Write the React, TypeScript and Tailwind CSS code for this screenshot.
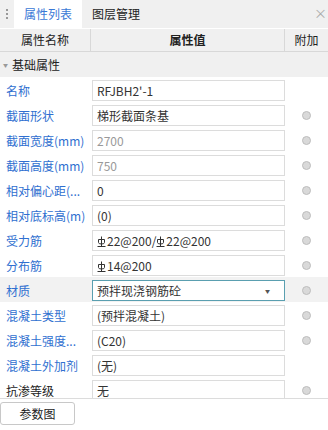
import React from 'react';

type Row = {
  label: string;
  value: React.ReactNode;
  dim?: boolean;
  dot?: boolean;
  plain?: boolean;
  select?: boolean;
};

function Rebar() {
  return (
    <svg width="9" height="11" viewBox="0 0 9 11" className="inline-block mr-[1px] -mt-[3px] align-middle" fill="none" stroke="#333" strokeWidth="1">
      <path d="M4.5 0.5V10.5" />
      <path d="M1.5 3.5V6.5Q1.5 8 4.5 8Q7.5 8 7.5 6.5V3.5Z" />
      <path d="M0.5 10.5H8.5" />
    </svg>
  );
}

const rows: Row[] = [
  { label: '名称', value: "RFJBH2'-1" },
  { label: '截面形状', value: '梯形截面条基', dot: true },
  { label: '截面宽度(mm)', value: '2700', dim: true, dot: true },
  { label: '截面高度(mm)', value: '750', dim: true, dot: true },
  { label: '相对偏心距(...', value: '0', dot: true },
  { label: '相对底标高(m)', value: '(0)', dot: true },
  {
    label: '受力筋',
    value: (
      <>
        <Rebar />22@200/<Rebar />22@200
      </>
    ),
    dot: true,
  },
  {
    label: '分布筋',
    value: (
      <>
        <Rebar />14@200
      </>
    ),
    dot: true,
  },
  { label: '材质', value: '预拌现浇钢筋砼', dot: true, select: true },
  { label: '混凝土类型', value: '(预拌混凝土)', dot: true },
  { label: '混凝土强度...', value: '(C20)', dot: true },
  { label: '混凝土外加剂', value: '(无)' },
  { label: '抗渗等级', value: '无', dot: true, plain: true },
];

export default function App() {
  return (
    <div
      className="w-[328px] h-[430px] flex flex-col bg-white text-[12px] text-[#333] overflow-hidden"
      style={{ fontFamily: '"Noto Sans CJK SC", "Noto Sans", sans-serif' }}
    >
      {/* tabs */}
      <div className="h-[28px] flex items-stretch bg-[#f0f0f0] relative">
        <div className="w-[14px] flex flex-col items-center justify-center gap-[2px]">
          <span className="w-[2px] h-[2px] bg-[#999]" />
          <span className="w-[2px] h-[2px] bg-[#999]" />
          <span className="w-[2px] h-[2px] bg-[#999]" />
        </div>
        <div className="w-[68px] bg-white flex items-center justify-center text-[#3a78d6]">属性列表</div>
        <div className="w-[68px] flex items-center justify-center text-[#222]">图层管理</div>
        <span className="absolute right-[1px] top-[6px] text-[#aaa] text-[13px] leading-none">×</span>
      </div>

      {/* header */}
      <div className="h-[24px] flex bg-[#f0f0f0] border-t border-white border-b border-b-[#d8d8d8] text-[#222]">
        <div className="w-[91px] flex items-center justify-center border-r border-[#d8d8d8]">属性名称</div>
        <div className="w-[194px] flex items-center justify-center font-bold border-r border-[#d8d8d8]">属性值</div>
        <div className="flex-1 flex items-center justify-center">附加</div>
      </div>

      {/* body */}
      <div className="flex-1 overflow-hidden">
        <div className="h-[25px] flex items-center bg-[#f0f0f0] text-[#222]">
          <span className="w-[12px] pl-[3px] text-[5px] text-[#999]">▼</span>
          <span>基础属性</span>
        </div>
        {rows.map((r) => (
          <div key={r.label} className={`h-[25px] flex items-start pt-[3px] ${r.select ? 'bg-[#f2f2f2]' : ''}`}>
            <div
              className={`w-[92px] pl-[6px] pr-[2px] h-[21px] leading-[21px] whitespace-nowrap overflow-hidden ${r.plain ? 'text-[#222]' : 'text-[#2f6fd0]'}`}
            >
              {r.label}
            </div>
            <div
              className={`w-[193px] h-[21px] leading-[19px] px-[4px] border bg-white flex items-center ${
                r.select ? 'border-[#5a9fb0]' : 'border-[#dcdcdc]'
              } ${r.dim ? 'text-[#999]' : 'text-[#333]'}`}
            >
              <span className="flex-1 whitespace-nowrap overflow-hidden">{r.value}</span>
              {r.select && <span className="text-[5px] text-[#555] mr-[10px]">▼</span>}
            </div>
            <div className="flex-1 h-[21px] flex items-center justify-center">
              {r.dot && <span className="w-[9px] h-[9px] rounded-full bg-[#d9d9d9] border border-[#bdbdbd]" />}
            </div>
          </div>
        ))}
      </div>

      {/* bottom */}
      <div className="h-[32px] border-t border-[#dcdcdc] bg-white pt-[3px]">
        <button className="w-[75px] h-[23px] border border-[#c8c8c8] rounded-[3px] bg-white text-[#222] text-[12px]">
          参数图
        </button>
      </div>
    </div>
  );
}
